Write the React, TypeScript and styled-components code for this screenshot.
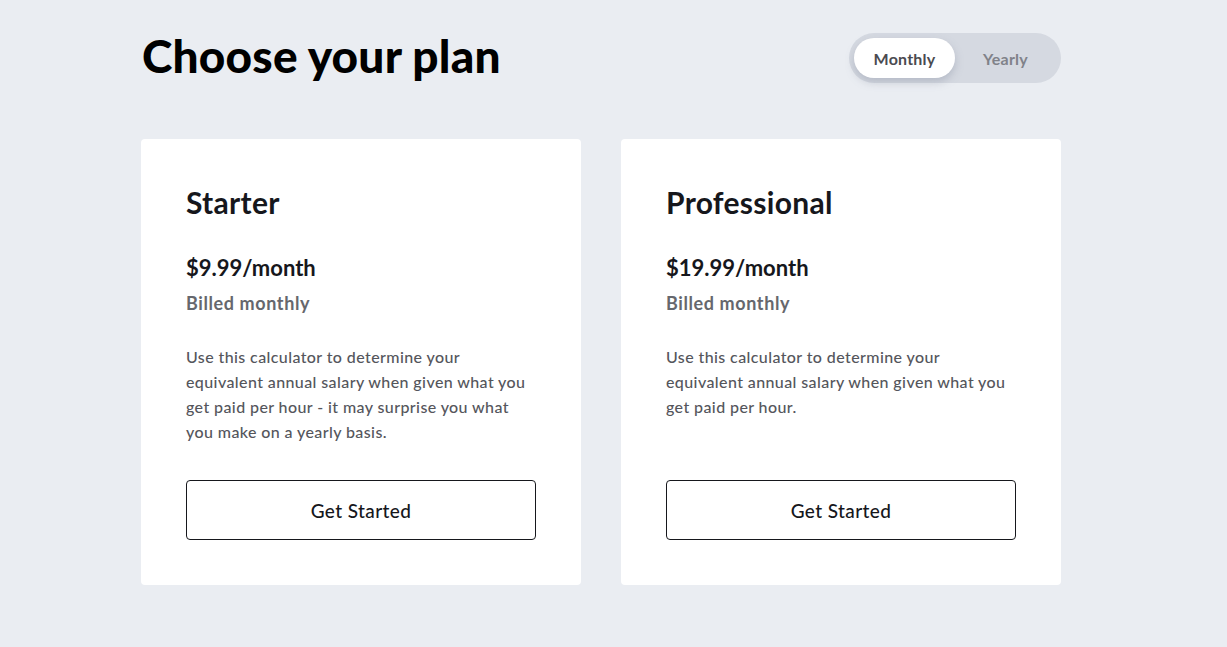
import React, { useState } from "react";
import styled, { createGlobalStyle } from "styled-components";

const Global = createGlobalStyle`
  html, body { margin: 0; padding: 0; background: #eaedf2; }
  body { font-family: Lato, "Noto Sans", sans-serif; -webkit-font-smoothing: antialiased; }
  * { box-sizing: border-box; }
`;

const Page = styled.div`
  width: 920px;
  margin-left: 141px;
  padding: 33px 0 62px;
`;

const Header = styled.header`
  display: flex;
  align-items: center;
  justify-content: space-between;
  height: 50px;
`;

const Title = styled.h1`
  margin: 0 0 4px;
  font-size: 46px;
  font-weight: 900;
  color: #000;
  letter-spacing: 0.2px;
  line-height: 1;
  padding-left: 1px;
`;

const Toggle = styled.div`
  display: flex;
  width: 212px;
  height: 50px;
  padding: 5px;
  border-radius: 25px;
  background: #d5d9e1;
`;

const ToggleButton = styled.button<{ $active: boolean }>`
  flex: 1;
  border: none;
  border-radius: 20px;
  font-family: inherit;
  font-size: 16px;
  font-weight: 700;
  letter-spacing: 0.2px;
  cursor: pointer;
  background: ${(p) => (p.$active ? "#ffffff" : "transparent")};
  color: ${(p) => (p.$active ? "#4a4b50" : "#808289")};
  box-shadow: ${(p) => (p.$active ? "0 4px 8px rgba(120,130,150,0.35)" : "none")};
`;

const Cards = styled.div`
  display: grid;
  grid-template-columns: 1fr 1fr;
  gap: 40px;
  margin-top: 56px;
`;

const Card = styled.section`
  background: #fff;
  border-radius: 4px;
  padding: 45px;
  display: flex;
  flex-direction: column;
  height: 446px;
`;

const PlanName = styled.h2`
  margin: 0;
  font-size: 30px;
  font-weight: 700;
  color: #16171c;
  line-height: 36px;
  letter-spacing: 0.3px;
`;

const Price = styled.div`
  margin-top: 33px;
  font-size: 22px;
  font-weight: 700;
  color: #16171c;
  line-height: 30px;
`;

const Billing = styled.div`
  margin-top: 7px;
  font-size: 18px;
  font-weight: 700;
  color: #66676d;
  line-height: 26px;
  letter-spacing: 0.6px;
`;

const Description = styled.p`
  margin: 28px 0 0;
  font-size: 16px;
  font-weight: 500;
  color: #55565c;
  line-height: 25px;
  letter-spacing: 0.4px;
  flex: 1;
`;

const CTA = styled.button`
  width: 350px;
  height: 60px;
  background: #fff;
  border: 1px solid #16171c;
  border-radius: 4px;
  font-family: inherit;
  font-size: 19px;
  font-weight: 500;
  letter-spacing: 0.4px;
  color: #16171c;
  cursor: pointer;
`;

const plans = [
  {
    name: "Starter",
    price: "$9.99/month",
    desc: "Use this calculator to determine your equivalent annual salary when given what you get paid per hour - it may surprise you what you make on a yearly basis.",
  },
  {
    name: "Professional",
    price: "$19.99/month",
    desc: "Use this calculator to determine your equivalent annual salary when given what you get paid per hour.",
  },
];

export default function App() {
  const [period, setPeriod] = useState<"monthly" | "yearly">("monthly");
  return (
    <>
      <Global />
      <Page>
        <Header>
          <Title>Choose your plan</Title>
          <Toggle>
            <ToggleButton $active={period === "monthly"} onClick={() => setPeriod("monthly")}>
              Monthly
            </ToggleButton>
            <ToggleButton $active={period === "yearly"} onClick={() => setPeriod("yearly")}>
              Yearly
            </ToggleButton>
          </Toggle>
        </Header>
        <Cards>
          {plans.map((p) => (
            <Card key={p.name}>
              <PlanName>{p.name}</PlanName>
              <Price>{p.price}</Price>
              <Billing>Billed monthly</Billing>
              <Description>{p.desc}</Description>
              <CTA>Get Started</CTA>
            </Card>
          ))}
        </Cards>
      </Page>
    </>
  );
}
